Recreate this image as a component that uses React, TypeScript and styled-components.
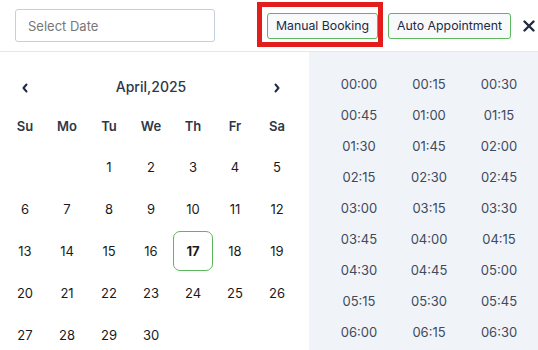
import { FC } from "react";
import styled, { createGlobalStyle, css } from "styled-components";

const GlobalStyle = createGlobalStyle`
  * { box-sizing: border-box; }
  body {
    margin: 0;
    font-family: Inter, "Noto Sans", sans-serif;
    background: #ffffff;
  }
`;

const WEEKDAYS = ["Su", "Mo", "Tu", "We", "Th", "Fr", "Sa"];
const FIRST_DAY = 2; // April 1, 2025 is a Tuesday
const DAYS_IN_MONTH = 30;
const SELECTED = 17;

const times: string[] = [];
for (let i = 0; i < 27; i++) {
  const h = Math.floor(i / 4);
  const m = (i % 4) * 15;
  times.push(`${String(h).padStart(2, "0")}:${String(m).padStart(2, "0")}`);
}

const Chevron: FC<{ dir: "left" | "right" }> = ({ dir }) => (
  <svg width="8" height="10" viewBox="0 0 8 10">
    <path
      d={dir === "left" ? "M5.5 1.5 L2.5 5 L5.5 8.5" : "M2.5 1.5 L5.5 5 L2.5 8.5"}
      fill="none"
      stroke="#1f2a44"
      strokeWidth="2"
      strokeLinecap="round"
      strokeLinejoin="round"
    />
  </svg>
);

const CloseIcon = () => (
  <svg width="12" height="12" viewBox="0 0 12 12">
    <path
      d="M1.5 1.5 L10.5 10.5 M10.5 1.5 L1.5 10.5"
      stroke="#1f2a44"
      strokeWidth="2.4"
      strokeLinecap="round"
    />
  </svg>
);

export default function App() {
  const cells: (number | null)[] = [];
  for (let i = 0; i < FIRST_DAY; i++) cells.push(null);
  for (let d = 1; d <= DAYS_IN_MONTH; d++) cells.push(d);

  return (
    <>
      <GlobalStyle />
      <Page>
        <Header>
          <DateInput placeholder="Select Date" readOnly />
          <Actions>
            <Marked>
              <ModeButton>Manual Booking</ModeButton>
            </Marked>
            <ModeButton>Auto Appointment</ModeButton>
            <CloseButton>
              <CloseIcon />
            </CloseButton>
          </Actions>
        </Header>
        <Body>
          <Calendar>
            <MonthRow>
              <NavButton>
                <Chevron dir="left" />
              </NavButton>
              <MonthTitle>April,2025</MonthTitle>
              <NavButton>
                <Chevron dir="right" />
              </NavButton>
            </MonthRow>
            <WeekGrid>
              {WEEKDAYS.map((w) => (
                <WeekDay key={w}>{w}</WeekDay>
              ))}
            </WeekGrid>
            <DayGrid>
              {cells.map((d, i) => (
                <DayCell key={i}>
                  {d && <Day $selected={d === SELECTED}>{d}</Day>}
                </DayCell>
              ))}
            </DayGrid>
          </Calendar>
          <TimePanel>
            {times.map((t) => (
              <TimeSlot key={t}>{t}</TimeSlot>
            ))}
          </TimePanel>
        </Body>
      </Page>
    </>
  );
}

const Page = styled.div`
  width: 538px;
  height: 350px;
  overflow: hidden;
  display: flex;
  flex-direction: column;
`;

const Header = styled.div`
  height: 52px;
  flex-shrink: 0;
  display: flex;
  align-items: center;
  justify-content: space-between;
  padding: 0 1px 0 15px;
  border-bottom: 1px solid #e4e7eb;
`;

const DateInput = styled.input`
  width: 200px;
  height: 33px;
  padding: 0 12px;
  border: 1px solid #c3cfdb;
  border-radius: 3px;
  font-family: Inter, sans-serif;
  font-size: 13px;
  color: #333;
  outline: none;
  &::placeholder {
    color: #777;
  }
`;

const Actions = styled.div`
  display: flex;
  align-items: center;
  gap: 10px;
`;

const Marked = styled.div`
  position: relative;
  display: flex;
  &::after {
    content: "";
    position: absolute;
    left: -10px;
    right: -5px;
    top: -11px;
    bottom: -8px;
    border: 5px solid #e31c1c;
    pointer-events: none;
  }
`;

const ModeButton = styled.button`
  height: 26px;
  padding: 0 8px;
  border: 1px solid #5cb85c;
  border-radius: 3px;
  background: #f8f9fa;
  font-family: Inter, sans-serif;
  font-size: 12.3px;
  color: #1f2a44;
  cursor: pointer;
`;

const CloseButton = styled.button`
  display: flex;
  align-items: center;
  justify-content: center;
  width: 16px;
  height: 16px;
  padding: 0;
  border: none;
  background: none;
  cursor: pointer;
`;

const Body = styled.div`
  flex: 1;
  display: flex;
  min-height: 0;
`;

const Calendar = styled.div`
  width: 309px;
  flex-shrink: 0;
  padding: 22px 11px 0 4px;
`;

const MonthRow = styled.div`
  display: flex;
  align-items: center;
  justify-content: space-between;
  height: 24px;
`;

const NavButton = styled.button`
  width: 42px;
  height: 24px;
  padding: 4px 0 0;
  display: flex;
  align-items: center;
  justify-content: center;
  border: none;
  background: none;
  cursor: pointer;
`;

const MonthTitle = styled.div`
  font-size: 14px;
  font-weight: 500;
  color: #2d3748;
`;

const gridCols = css`
  display: grid;
  grid-template-columns: repeat(7, 42px);
`;

const WeekGrid = styled.div`
  ${gridCols};
  margin-top: 8px;
  height: 40px;
  align-items: center;
`;

const WeekDay = styled.div`
  text-align: center;
  font-size: 13px;
  font-weight: 600;
  color: #2d3748;
`;

const DayGrid = styled.div`
  ${gridCols};
  grid-auto-rows: 42px;
`;

const DayCell = styled.div`
  display: flex;
  align-items: center;
  justify-content: center;
`;

const Day = styled.div<{ $selected: boolean }>`
  width: 40px;
  height: 40px;
  display: flex;
  align-items: center;
  justify-content: center;
  font-size: 13px;
  color: #1a1a1a;
  border-radius: 7px;
  border: 1px solid transparent;
  ${(p) =>
    p.$selected &&
    css`
      border-color: #5cb85c;
      font-weight: 700;
    `}
`;

const TimePanel = styled.div`
  flex: 1;
  background: #f0f4f9;
  padding: 16px 4px 0 15px;
  display: grid;
  grid-template-columns: repeat(3, 70px);
  grid-auto-rows: 31px;
  align-content: start;
`;

const TimeSlot = styled.div`
  display: flex;
  align-items: center;
  justify-content: center;
  font-size: 13px;
  color: #3f4a5c;
`;
